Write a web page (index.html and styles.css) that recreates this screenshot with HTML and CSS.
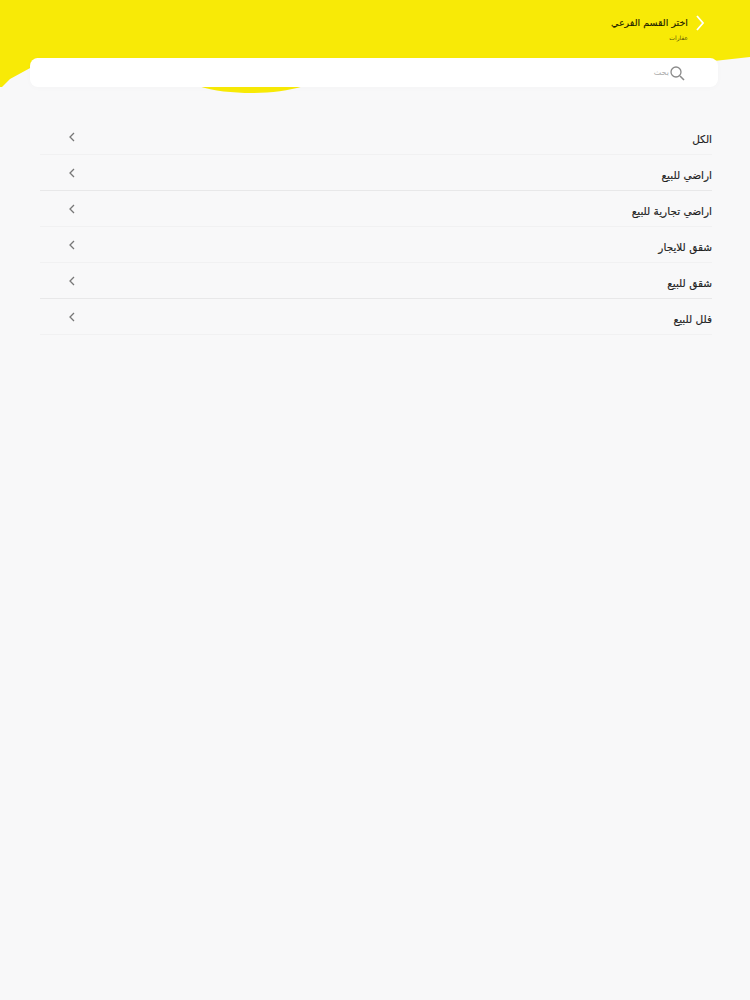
FILE: index.html

```html
<!DOCTYPE html>
<html lang="ar" dir="rtl">
<head>
    <meta charset="utf-8">
    <title>اختر القسم الفرعي</title>
    <link rel="stylesheet" href="styles.css">
</head>
<body>
    <!-- خلفية الهيدر -->
    <svg class="header-bg" width="750" height="100" viewBox="0 0 750 100">
        <path d="M0 0H750V57L714 61L640 58H37L32 67L10 79L2 87H0Z" fill="#f8ea06"/>
        <path d="M198 86H304C288 91 270 93 252 93C232 93 214 91 198 86Z" fill="#f8ea06"/>
    </svg>

    <div class="header">
        <svg class="back-icon" width="10" height="18" viewBox="0 0 10 18">
            <path d="M2 2L8 9L2 16" fill="none" stroke="#fff" stroke-width="1.8"/>
        </svg>
        <div>
            <div class="header-title">اختر القسم الفرعي</div>
            <div class="header-sub">عقارات</div>
        </div>
    </div>

    <div class="search-box">
        <svg class="search-icon" width="16" height="16" viewBox="0 0 16 16">
            <circle cx="7" cy="7" r="5" fill="none" stroke="#8a8a8a" stroke-width="1.3"/>
            <path d="M11 11L15 15" stroke="#8a8a8a" stroke-width="1.6"/>
        </svg>
        <span class="search-text">بحث</span>
    </div>

    <div class="list">
        <div class="list-item"><span>الكل</span><svg class="chevron" width="6" height="10" viewBox="0 0 6 10"><path d="M5 1L1 5L5 9" fill="none" stroke="#777" stroke-width="1.3"/></svg></div>
        <div class="list-item"><span>اراضي للبيع</span><svg class="chevron" width="6" height="10" viewBox="0 0 6 10"><path d="M5 1L1 5L5 9" fill="none" stroke="#777" stroke-width="1.3"/></svg></div>
        <div class="list-item"><span>اراضي تجارية للبيع</span><svg class="chevron" width="6" height="10" viewBox="0 0 6 10"><path d="M5 1L1 5L5 9" fill="none" stroke="#777" stroke-width="1.3"/></svg></div>
        <div class="list-item"><span>شقق للايجار</span><svg class="chevron" width="6" height="10" viewBox="0 0 6 10"><path d="M5 1L1 5L5 9" fill="none" stroke="#777" stroke-width="1.3"/></svg></div>
        <div class="list-item"><span>شقق للبيع</span><svg class="chevron" width="6" height="10" viewBox="0 0 6 10"><path d="M5 1L1 5L5 9" fill="none" stroke="#777" stroke-width="1.3"/></svg></div>
        <div class="list-item"><span>فلل للبيع</span><svg class="chevron" width="6" height="10" viewBox="0 0 6 10"><path d="M5 1L1 5L5 9" fill="none" stroke="#777" stroke-width="1.3"/></svg></div>
    </div>
</body>
</html>
```

FILE: styles.css

```css
body {
    margin: 0;
    font-family: "DejaVu Sans", sans-serif;
    background-color: #f8f8f9;
    color: #222;
}

.header-bg {
    position: absolute;
    top: 0;
    left: 0;
}

.header {
    position: relative;
    height: 58px;
    padding-right: 45px;
    box-sizing: border-box;
    display: flex;
    align-items: flex-start;
    gap: 7px;
    padding-top: 15px;
}

.back-icon {
    flex-shrink: 0;
    margin-top: -1px;
}

.header-title {
    font-size: 9.5px;
    line-height: 16px;
    color: #1f1f00;
    -webkit-text-stroke: 0.15px #1f1f00;
}

.header-sub {
    font-size: 6px;
    line-height: 12px;
    margin-top: 1px;
    color: #55530a;
}

.search-box {
    position: relative;
    height: 29px;
    margin: 0 32px 0 30px;
    padding-right: 33px;
    background-color: #fff;
    border-radius: 8px;
    box-shadow: 0 1px 6px rgba(0, 0, 0, 0.02);
    display: flex;
    align-items: center;
}

.search-text {
    font-size: 8px;
    color: #aaa;
}

.list {
    margin: 32px 38px 0 40px;
}

.list-item {
    height: 36px;
    box-sizing: border-box;
    border-bottom: 1px solid #f1f1f2;
    display: flex;
    align-items: center;
    justify-content: space-between;
    font-size: 10.5px;
    padding-left: 29px;
}

.list-item:nth-child(3n+2) {
    border-bottom-color: #e8e8e9;
}

.list-item span {
    padding-top: 4px;
    -webkit-text-stroke: 0.15px #222;
}

.chevron {
    margin-top: 1px;
}
```
